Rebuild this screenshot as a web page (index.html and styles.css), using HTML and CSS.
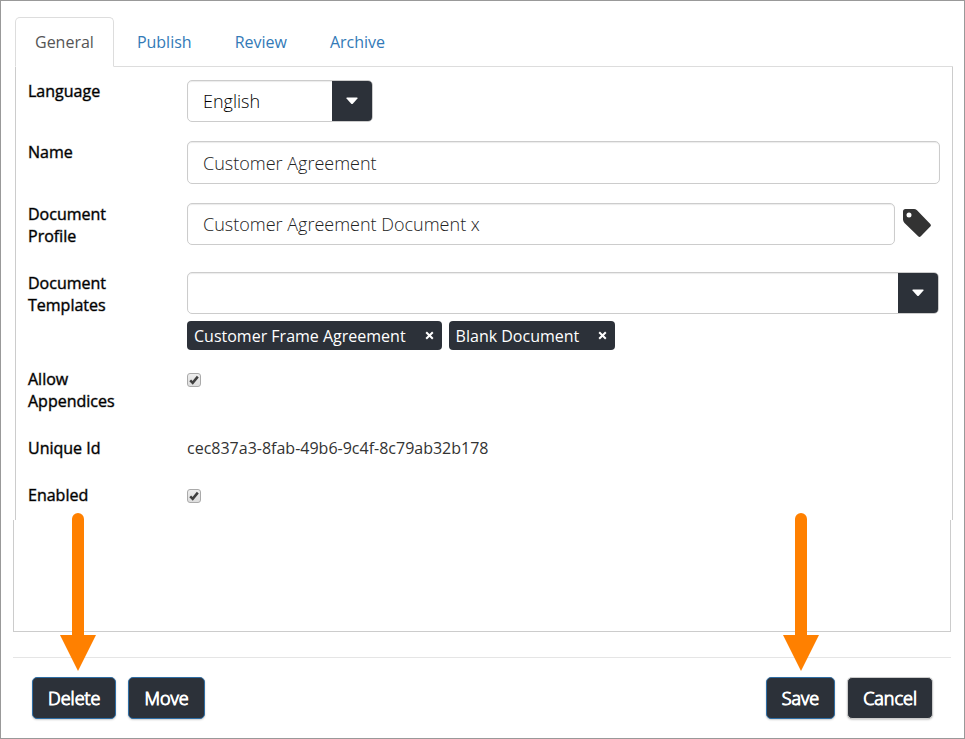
FILE: index.html
```html
<!DOCTYPE html>
<html lang="en">
<head>
<meta charset="utf-8">
<title>Document Type</title>
<link rel="stylesheet" href="styles.css">
</head>
<body>
<form class="dialog" onsubmit="return false">
  <nav class="tabs">
    <a class="tab tab-active" href="#general" aria-current="page">General</a>
    <a class="tab" href="#publish">Publish</a>
    <a class="tab" href="#review">Review</a>
    <a class="tab" href="#archive">Archive</a>
  </nav>

  <section class="panel" id="general">
    <div class="row row-control">
      <label class="label" for="language">Language</label>
      <div class="picker picker-small">
        <select class="field select" id="language"><option>English</option></select>
        <span class="caret-box"><svg class="caret" viewBox="0 0 12 8" aria-hidden="true"><path d="M1 0.500H11Q12.200 0.500 11.500 1.600L7 6.500Q6 7.500 5 6.500L0.500 1.600Q-0.200 0.500 1 0.500Z"/></svg></span>
      </div>
    </div>
    <div class="row row-control">
      <label class="label" for="name">Name</label>
      <input class="field field-main" id="name" type="text" value="Customer Agreement">
    </div>
    <div class="row">
      <label class="label" for="profile">Document Profile</label>
      <div class="field-group">
        <input class="field" id="profile" type="text" value="Customer Agreement Document x">
        <button class="tag-button" type="button" aria-label="Choose profile"><svg class="tag-icon" viewBox="0 0 28 28" aria-hidden="true"><path fill-rule="evenodd" d="M2.500 0H11Q12.500 0 14 1.300L27.300 14.900Q28.500 16.300 27.300 17.600L17.800 27.300Q16.500 28.500 15.200 27.300L1.500 13.900Q0 12.400 0 10.500V2.500Q0 0 2.500 0ZM6 3.500A2.500 2.500 0 1 0 6 8.500A2.500 2.500 0 1 0 6 3.500Z"/></svg></button>
      </div>
    </div>
    <div class="row row-chips">
      <label class="label" for="templates">Document Templates</label>
      <div class="templates">
        <div class="picker">
          <select class="field select" id="templates"><option></option></select>
          <span class="caret-box"><svg class="caret" viewBox="0 0 12 8" aria-hidden="true"><path d="M1 0.500H11Q12.200 0.500 11.500 1.600L7 6.500Q6 7.500 5 6.500L0.500 1.600Q-0.200 0.500 1 0.500Z"/></svg></span>
        </div>
        <div class="chips">
          <span class="chip">Customer Frame Agreement
            <button class="chip-close" type="button" aria-label="Remove Customer Frame Agreement"><svg viewBox="0 0 9 9" aria-hidden="true"><path d="M1.200 1.200L7.800 7.800M7.800 1.200L1.200 7.800"/></svg></button>
          </span>
          <span class="chip">Blank Document
            <button class="chip-close" type="button" aria-label="Remove Blank Document"><svg viewBox="0 0 9 9" aria-hidden="true"><path d="M1.200 1.200L7.800 7.800M7.800 1.200L1.200 7.800"/></svg></button>
          </span>
        </div>
      </div>
    </div>
    <div class="row">
      <label class="label" for="appendices">Allow Appendices</label>
      <div class="check">
        <input class="check-box" id="appendices" type="checkbox" checked>
        <svg class="check-mark" viewBox="0 0 14 14" aria-hidden="true"><path d="M3.200 7.300L5.700 9.800L10.800 3.600"/></svg>
      </div>
    </div>
    <div class="row">
      <span class="label">Unique Id</span>
      <span class="value">cec837a3-8fab-49b6-9c4f-8c79ab32b178</span>
    </div>
    <div class="row">
      <label class="label" for="enabled">Enabled</label>
      <div class="check">
        <input class="check-box" id="enabled" type="checkbox" checked>
        <svg class="check-mark" viewBox="0 0 14 14" aria-hidden="true"><path d="M3.200 7.300L5.700 9.800L10.800 3.600"/></svg>
      </div>
    </div>
  </section>
  <div class="panel-end"></div>

  <footer class="actions">
    <div class="action">
      <button class="button" type="button">Delete</button>
      <svg class="arrow arrow-delete" viewBox="0 0 36 158" aria-hidden="true"><path d="M12 6A6 6 0 0 1 24 6V122H36L18 158L0 122H12Z"/></svg>
    </div>
    <button class="button" type="button">Move</button>
    <div class="action action-save">
      <button class="button" type="submit">Save</button>
      <svg class="arrow arrow-save" viewBox="0 0 36 158" aria-hidden="true"><path d="M12 6A6 6 0 0 1 24 6V122H36L18 158L0 122H12Z"/></svg>
    </div>
    <button class="button button-plain" type="button">Cancel</button>
  </footer>
</form>
</body>
</html>
```
FILE: styles.css
```css
* {
  box-sizing: border-box;
}

body {
  margin: 0;
  background: #fff;
  color: #333;
  font: 16px/22px "Open Sans", "Noto Sans", sans-serif;
}

button,
input,
select {
  margin: 0;
  font: inherit;
}

.dialog {
  display: flex;
  flex-direction: column;
  min-height: 100vh;
  padding: 16px 13px 19px 12px;
  border: 1px solid #999;
}

/* Tabs */
.tabs {
  display: flex;
  gap: 3px;
  margin: 0 -2px 0 2px;
  border-bottom: 1px solid #ddd;
}

.tab {
  margin-bottom: -1px;
  padding: 13px 19px;
  border: 1px solid transparent;
  border-radius: 5px 5px 0 0;
  color: #337ab7;
  text-decoration: none;
}

.tab-active {
  border-color: #ddd #ddd #fff;
  background: #fff;
  color: #555;
}

/* Form panel */
.panel {
  margin: 0 -2px 0 2px;
  padding: 13px 12px 0;
  border: solid #ccc;
  border-width: 0 1px;
}

.panel-end {
  flex: 1;
  min-height: 80px;
  border: solid #ccc;
  border-width: 0 1px 1px;
}

.row {
  display: grid;
  grid-template-columns: 159px 1fr;
  align-items: start;
  margin-bottom: 25px;
}

.row:last-child {
  margin-bottom: 14px;
}

.row-control {
  margin-bottom: 19px;
}

.row-chips {
  margin-bottom: 18px;
}

.label {
  max-width: 110px;
  color: #000;
  -webkit-text-stroke: 1px rgba(0, 0, 0, 0.4);
}

.field {
  width: 100%;
  height: 42px;
  padding: 0 15px;
  border: 1px solid #ccc;
  border-radius: 5px;
  background: #fff;
  box-shadow: inset 0 1px 1px rgba(0, 0, 0, 0.08);
  color: #222;
  font-size: 18px;
  font-weight: 300;
}

.field-main {
  height: 43px;
}

.select {
  appearance: none;
  color: #000;
}

.picker {
  display: grid;
  margin-right: 1px;
}

.picker-small {
  width: 186px;
}

.picker > * {
  grid-area: 1 / 1;
}

.caret-box {
  display: grid;
  place-items: center;
  justify-self: end;
  width: 40px;
  margin: 1px;
  border-radius: 0 4px 4px 0;
  background: #2c3139;
  pointer-events: none;
}

.caret {
  width: 12px;
  height: 8px;
  fill: #fff;
}

.field-group {
  display: flex;
  align-items: center;
  gap: 8px;
}

.field-group .field {
  flex: 1;
}

.tag-button {
  display: flex;
  width: 37px;
  padding: 0 0 2px;
  border: 0;
  background: none;
}

.tag-icon {
  width: 28px;
  height: 28px;
  fill: #333;
}

.chips {
  display: flex;
  flex-wrap: wrap;
  gap: 7px;
  margin-top: 7px;
}

.chip {
  display: flex;
  align-items: center;
  gap: 19px;
  height: 29px;
  padding: 0 8px 0 7px;
  border-radius: 4px;
  background: #2c3139;
  color: #fff;
}

.chip-close {
  display: flex;
  padding: 0;
  border: 0;
  background: none;
}

.chip-close svg {
  width: 9px;
  height: 9px;
  fill: none;
  stroke: #fff;
  stroke-width: 2;
}

.check {
  display: grid;
  justify-content: start;
  padding-top: 5px;
}

.check > * {
  grid-area: 1 / 1;
  width: 14px;
  height: 14px;
}

.check-box {
  appearance: none;
  border: 1px solid #aaa;
  border-radius: 3px;
  background: linear-gradient(#eee, #ddd);
}

.check-mark {
  fill: none;
  stroke: #404040;
  stroke-width: 2.500;
  pointer-events: none;
}

/* Footer */
.actions {
  display: flex;
  gap: 12px;
  margin-top: 25px;
  padding: 19px 18px 0 19px;
  border-top: 1px solid #e5e5e5;
}

.action {
  position: relative;
}

.action-save {
  margin-left: auto;
}

.button {
  height: 42px;
  padding: 0 15px;
  border: 1px solid #2e6da4;
  border-radius: 5px;
  background: #2c3139;
  box-shadow: 0 1px 2px rgba(0, 0, 0, 0.2);
  color: #fff;
  font-size: 18px;
  font-weight: 300;
  -webkit-text-stroke: 1px #fff;
}

.button-plain {
  border-color: #ccc;
}

/* Callout arrows */
.arrow {
  position: absolute;
  bottom: calc(100% + 6px);
  width: 36px;
  height: 158px;
  fill: #ff8000;
}

.arrow-delete {
  left: 28px;
}

.arrow-save {
  left: 17px;
}
```
